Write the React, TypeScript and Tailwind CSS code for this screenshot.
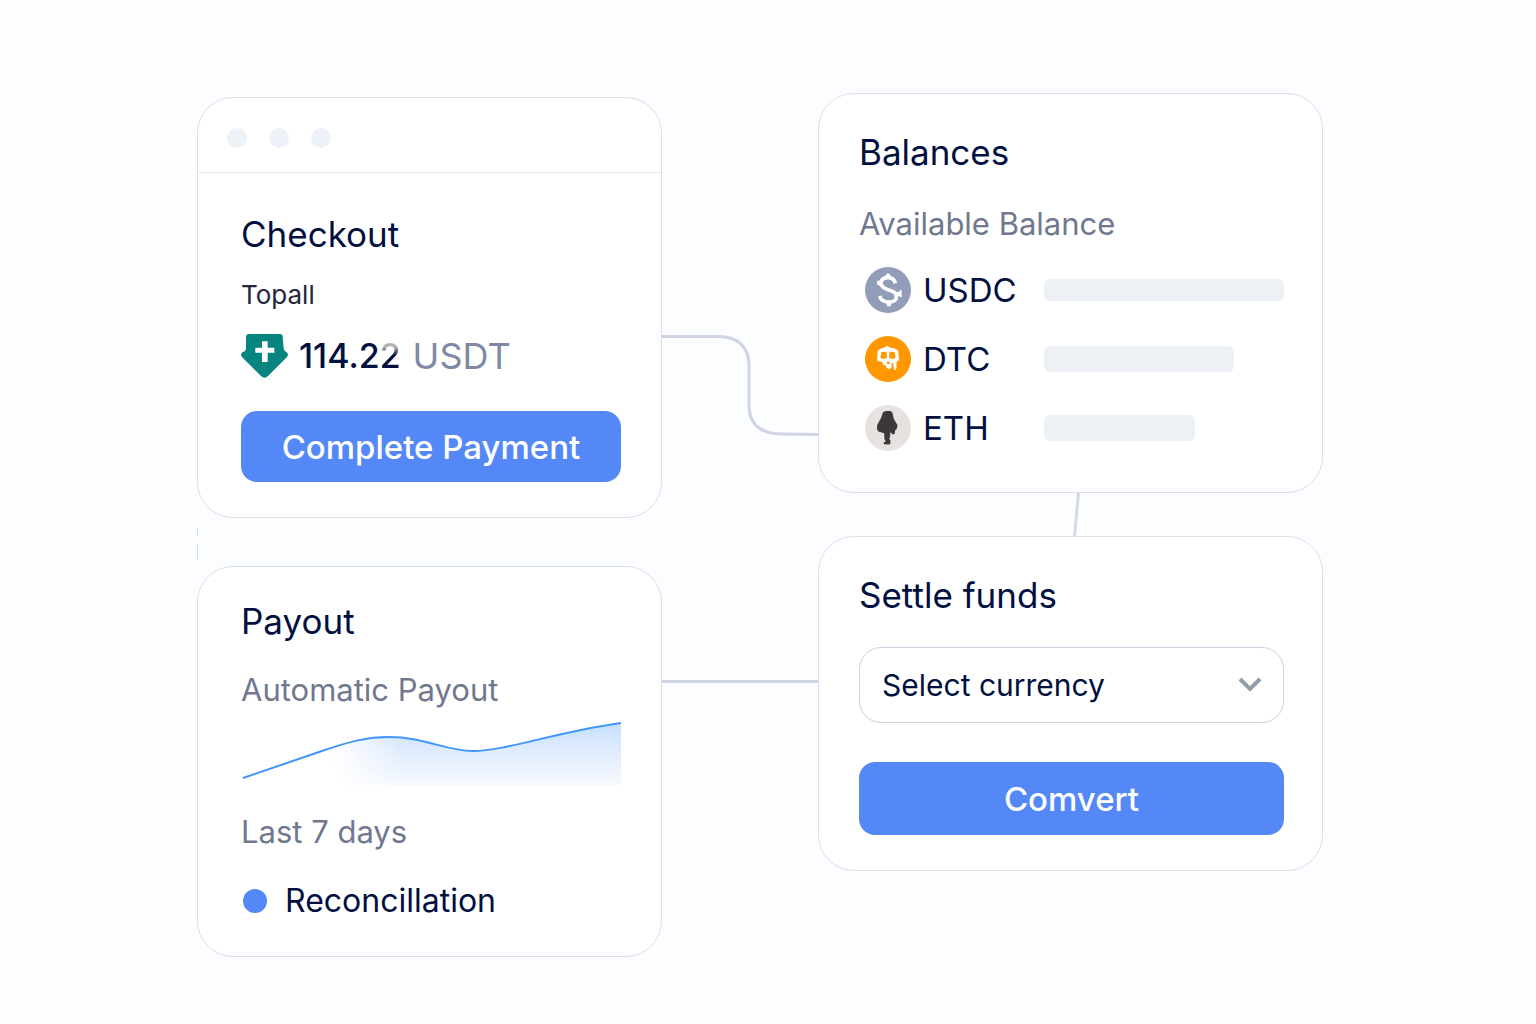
import React, { useState } from 'react';

interface Balance {
  symbol: string;
  icon: React.ReactNode;
  barClass: string;
}

const TetherIcon: React.FC = () => (
  <svg viewBox="33 42 141 132" className="w-[47px] h-11 shrink-0" aria-hidden="true">
    <path
      d="M57 42H150Q158 42 158 50L161 86Q162 92 168 95Q178 101 171 111L114 168Q104 179 93 168L36 111Q29 101 39 96Q48 93 48 86V51Q48 42 57 42Z"
      fill="#06847f"
    />
    <path d="M96 64H113V83H133V98H113V126H96V98H76V83H96Z" fill="#fff" />
  </svg>
);

const UsdcIcon: React.FC = () => (
  <svg viewBox="29 25 138 138" className="w-[46px] h-[46px] shrink-0" aria-hidden="true">
    <circle cx="98" cy="94" r="69" fill="#929db9" />
    <path
      d="M120 74C117 61 109 57 98 57C84 57 77 64 77 74C77 85 86 89 98 93C114 98 123 102 123 114C123 125 113 130 101 130C87 130 77 126 73 112"
      fill="none"
      stroke="#fff"
      strokeWidth="11"
    />
    <path d="M88 57L91 48L98 44L105 48L108 57ZM92 131H107V143H96ZM65 66H80L79 81H71L65 77ZM119 100L132 99L134 95H139V115H134L130 111L119 117Z" fill="#fff" />
  </svg>
);

const DtcIcon: React.FC = () => (
  <svg viewBox="29 221 140 140" className="w-[46px] h-[46px] shrink-0" aria-hidden="true">
    <circle cx="99" cy="291" r="70" fill="#ff9800" />
    <path
      fillRule="evenodd"
      fill="#fff"
      d="M68 266Q74 258 86 257L96 251L106 257Q124 258 130 267L133 294L125 300V318L122 326L117 322L115 303L110 304V317L103 322L94 318V311L85 309L82 300L67 297L66 287ZM79 270L76 287L82 291L95 289V269ZM103 269V289L117 291L122 286L119 270ZM97 299L94 304L99 307L105 304L103 299Z"
    />
  </svg>
);

const EthIcon: React.FC = () => (
  <svg viewBox="29 431 137 137" className="w-[46px] h-[46px] shrink-0" aria-hidden="true">
    <circle cx="97.500" cy="499.500" r="68.500" fill="#e7e1df" />
    <path
      fill="#3c373b"
      d="M82 454Q85 449 92 449H105Q111 451 112 459L115 473L126 491L123 503L119 506L117 517L110 519L107 513L104 514V526L101 531L105 537L104 549L86 548L84 543L91 540L87 533L86 515L81 514L69 510L65 504V491L77 469Z"
    />
  </svg>
);

const balances: Balance[] = [
  { symbol: 'USDC', icon: <UsdcIcon />, barClass: 'w-full h-[22px]' },
  { symbol: 'DTC', icon: <DtcIcon />, barClass: 'w-[79%] h-[26px]' },
  { symbol: 'ETH', icon: <EthIcon />, barClass: 'w-[63%] h-[26px]' },
];

const Card: React.FC<{ className?: string; children: React.ReactNode }> = ({ className = '', children }) => (
  <section className={`bg-white border border-[#d9dfeb] rounded-[36px] ${className}`}>{children}</section>
);

const CheckoutCard: React.FC = () => (
  <Card>
    <div className="flex items-center gap-[22px] h-[75px] pl-[29px] pt-1.5 border-b border-[#e9ecf1]">
      <span className="size-5 rounded-full bg-[#edf2f8]" />
      <span className="size-5 rounded-full bg-[#edf2f8]" />
      <span className="size-5 rounded-full bg-[#edf2f8]" />
    </div>
    <div className="pl-[43px] pr-10 pt-[39px] pb-[35px]">
      <h2 className="text-[35px] leading-[44px]">Checkout</h2>
      <p className="mt-[21px] text-[26px] leading-9 text-[#23263d]">Topall</p>
      <div className="mt-5 flex items-center h-[46px] text-[34px] leading-[44px]">
        <TetherIcon />
        <span className="ml-[11px] font-medium">
          114.2
          <span className="bg-linear-to-b from-[#b4b4b4] from-30% to-[#02103f] to-50% bg-clip-text text-transparent">2</span>
        </span>
        <span className="ml-3 text-[36px] text-[#7f89a5]">USDT</span>
      </div>
      <button
        type="button"
        className="mt-8 w-full h-[71px] rounded-2xl bg-[#5488f7] text-white text-[33px] leading-[44px] font-medium"
      >
        Complete Payment
      </button>
    </div>
  </Card>
);

const PayoutCard: React.FC = () => (
  <Card className="pl-[43px] pr-10 pt-8 pb-[33px]">
    <h2 className="text-[35px] leading-[44px]">Payout</h2>
    <p className="mt-[25px] text-[31px] leading-[44px] text-[#70788f]">Automatic Payout</p>
    <svg viewBox="0 0 380 64" preserveAspectRatio="none" className="mt-[9px] block w-full h-16" aria-hidden="true">
      <defs>
        <linearGradient id="areaFade" x1="0" y1="0" x2="0" y2="1">
          <stop offset="0" stopColor="#c4dffc" />
          <stop offset="0.400" stopColor="#deebfd" />
          <stop offset="1" stopColor="#f6f9fe" />
        </linearGradient>
        <linearGradient id="areaReveal" x1="0" y1="0" x2="1" y2="0">
          <stop offset="0.240" stopColor="#fff" stopOpacity="0" />
          <stop offset="0.420" stopColor="#fff" />
        </linearGradient>
        <mask id="areaMask">
          <rect width="380" height="64" fill="url(#areaReveal)" />
        </mask>
      </defs>
      <path
        d="M2 57L78 31C110 20 126 16 148 16C184 16 204 30 232 30C264 30 315 11 380 2V64H2Z"
        fill="url(#areaFade)"
        mask="url(#areaMask)"
      />
      <path
        d="M2 57L78 31C110 20 126 16 148 16C184 16 204 30 232 30C264 30 315 11 380 2"
        fill="none"
        stroke="#4096fb"
        strokeWidth="2"
      />
    </svg>
    <p className="mt-[25px] text-[31px] leading-[44px] text-[#70788f]">Last 7 days</p>
    <div className="mt-[25px] flex items-center gap-[18px]">
      <span className="ml-0.5 size-6 rounded-full bg-[#5488f7]" />
      <span className="text-[32px] leading-[44px]">Reconcillation</span>
    </div>
  </Card>
);

const BalancesCard: React.FC = () => (
  <Card className="pl-10 pr-[38px] pt-9 pb-10">
    <h2 className="text-[35px] leading-[44px]">Balances</h2>
    <p className="mt-7 text-[31px] leading-[44px] text-[#70788f]">Available Balance</p>
    <ul className="mt-5 flex flex-col gap-[21px]">
      {balances.map((b) => (
        <li key={b.symbol} className="flex items-center h-12 pl-1.5">
          {b.icon}
          <span className="ml-3 w-[121px] shrink-0 text-[33px] leading-[44px]">{b.symbol}</span>
          <div className="flex-1">
            <div className={`rounded-md bg-[#edf1f6] ${b.barClass}`} />
          </div>
        </li>
      ))}
    </ul>
  </Card>
);

const SettleCard: React.FC = () => {
  const [currency, setCurrency] = useState<string>('');

  return (
    <Card className="pl-10 pr-[38px] pt-9 pb-[35px]">
      <h2 className="text-[35px] leading-[44px]">Settle funds</h2>
      <div className="relative mt-[30px]">
        <select
          aria-label="Select currency"
          value={currency}
          onChange={(e) => setCurrency(e.target.value)}
          className="block w-full h-[76px] pl-[22px] pr-16 appearance-none rounded-[22px] border border-[#cbd1de] bg-white text-[30px] leading-[44px]"
        >
          <option value="">Select currency</option>
          {balances.map((b) => (
            <option key={b.symbol} value={b.symbol}>{b.symbol}</option>
          ))}
        </select>
        <svg
          viewBox="0 0 24 16"
          className="absolute right-[22px] top-[30px] w-6 h-4 pointer-events-none"
          aria-hidden="true"
        >
          <path d="M2 2L12 12L22 2" fill="none" stroke="#929cab" strokeWidth="4" />
        </svg>
      </div>
      <button
        type="button"
        className="mt-[39px] w-full h-[73px] rounded-2xl bg-[#5488f7] text-white text-[33px] leading-[44px] font-medium"
      >
        Comvert
      </button>
    </Card>
  );
};

const App: React.FC = () => {
  return (
    <main className="min-h-screen bg-[#fcfdff] pl-[197px] pr-[213px] pt-[93px] pb-[67px] font-['Inter','Liberation_Sans',sans-serif] text-[#02103f]">
      <div className="grid grid-cols-[465fr_156fr_505fr] items-start">
        <div className="pt-1">
          <CheckoutCard />
          <svg viewBox="0 0 2 48" className="block w-0.5 h-12" aria-hidden="true">
            <path d="M0.500 10V18M0.500 26V42" stroke="#d9dfeb" strokeWidth="1" />
          </svg>
          <PayoutCard />
        </div>

        <div className="pt-[241px]">
          <svg viewBox="0 0 156 104" preserveAspectRatio="none" className="block w-full h-[104px]" aria-hidden="true">
            <path
              d="M0 2.500H56C76 2.500 87 13 87 32V71C87 90 98 100 121 100L156 100.500"
              fill="none"
              stroke="#ced4e3"
              strokeWidth="3"
            />
          </svg>
          <div className="mt-[242px] h-[3px] bg-[#ced4e3]" />
        </div>

        <div>
          <BalancesCard />
          <svg viewBox="0 0 505 43" preserveAspectRatio="none" className="block w-full h-[43px]" aria-hidden="true">
            <path d="M260.500 0L256.500 43" stroke="#d3d9e6" strokeWidth="3" />
          </svg>
          <SettleCard />
        </div>
      </div>
    </main>
  );
};

export default App;
